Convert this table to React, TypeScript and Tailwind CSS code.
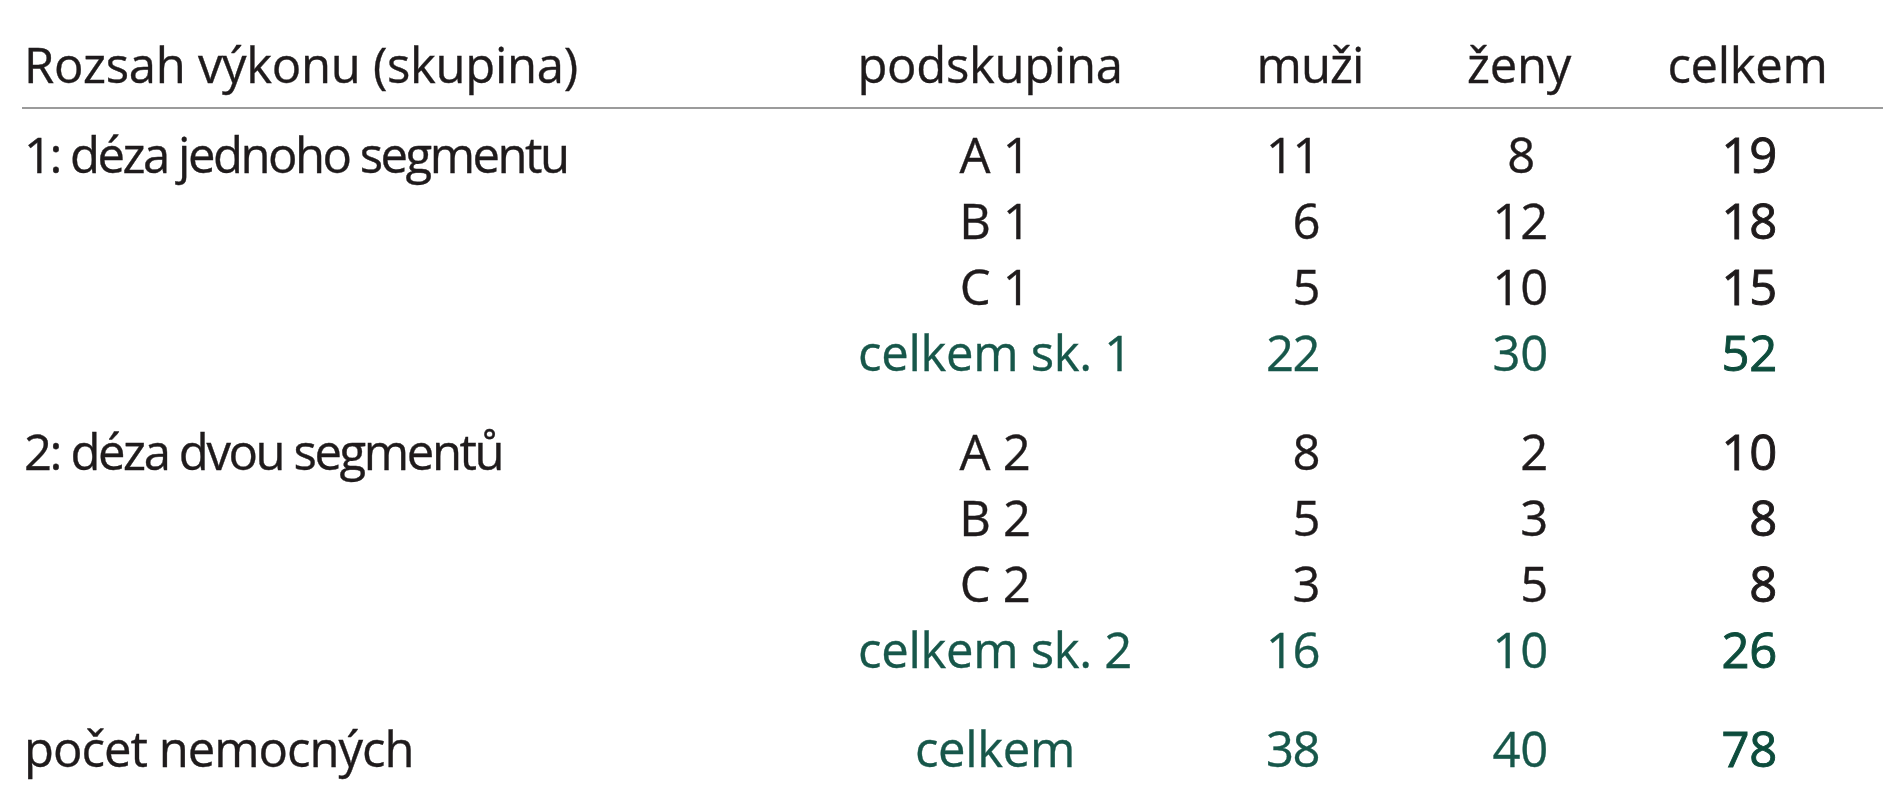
import React from "react";

type RowData = {
  label: string;
  sub: string;
  m: string;
  z: string;
  c: string;
  green?: boolean;
  mt?: string;
  zExtra?: string;
  lt?: string;
};

const cols = "grid grid-cols-[758px_430px_210px_198px_265px]";

const rows: RowData[] = [
  { label: "1: déza jednoho segmentu", lt: "tracking-[-2.5px]", sub: "A 1", m: "11", z: "8", c: "19", zExtra: "pr-[83px]" },
  { label: "", sub: "B 1", m: "6", z: "12", c: "18" },
  { label: "", sub: "C 1", m: "5", z: "10", c: "15" },
  { label: "", sub: "celkem sk. 1", m: "22", z: "30", c: "52", green: true },
  { label: "2: déza dvou segmentů", lt: "tracking-[-2.4px]", sub: "A 2", m: "8", z: "2", c: "10", mt: "mt-[33px]" },
  { label: "", sub: "B 2", m: "5", z: "3", c: "8" },
  { label: "", sub: "C 2", m: "3", z: "5", c: "8" },
  { label: "", sub: "celkem sk. 2", m: "16", z: "10", c: "26", green: true },
  { label: "počet nemocných", lt: "tracking-[-1px]", sub: "celkem", m: "38", z: "40", c: "78", green: true, mt: "mt-[33px]" },
];

function Row({ r }: { r: RowData }) {
  const subColor = r.green ? "text-[#17574a]" : "text-[#1f1b1c]";
  const numColor = r.green ? "text-[#17574a]" : "text-[#1f1b1c]";
  const totColor = r.green ? "text-[#0d4c3c]" : "text-[#1f1b1c]";
  return (
    <div className={`${cols} h-[66px] leading-[66px] ${r.mt ?? ""}`}>
      <div className={`text-[#1f1b1c] pl-[2px] whitespace-nowrap ${r.lt ?? ""}`}>{r.label}</div>
      <div className={`text-center whitespace-nowrap ${subColor}`}>{r.sub}</div>
      <div className={`text-right pr-[101px] tracking-[-1.5px] ${numColor}`}>{r.m}</div>
      <div className={`text-right ${r.zExtra ?? "pr-[70px]"} ${numColor}`}>{r.z}</div>
      <div className={`text-right pr-[106px] [-webkit-text-stroke:0.9px] ${totColor}`}>{r.c}</div>
    </div>
  );
}

export default function App() {
  return (
    <div
      className="w-[1890px] h-[800px] bg-white overflow-hidden pt-[31px] pl-[22px] text-[49px] tracking-[-0.3px] [-webkit-text-stroke:0.35px]"
      style={{ fontFamily: '"Open Sans", "Noto Sans", sans-serif' }}
    >
      <div className="w-[1861px]">
        <div className={`${cols} h-[78px] leading-[66px] pb-[10px] border-b-2 border-[#9b9b9b] text-[#1f1b1c]`}>
          <div className="pl-[2px] whitespace-nowrap">Rozsah výkonu (skupina)</div>
          <div className="text-center pr-[10px]">podskupina</div>
          <div className="text-center pr-[10px] tracking-[-1px]">muži</div>
          <div className="text-center">ženy</div>
          <div className="text-center pr-[6px]">celkem</div>
        </div>
        <div className="mt-[12px]">
          {rows.map((r, i) => (
            <Row key={i} r={r} />
          ))}
        </div>
      </div>
    </div>
  );
}
